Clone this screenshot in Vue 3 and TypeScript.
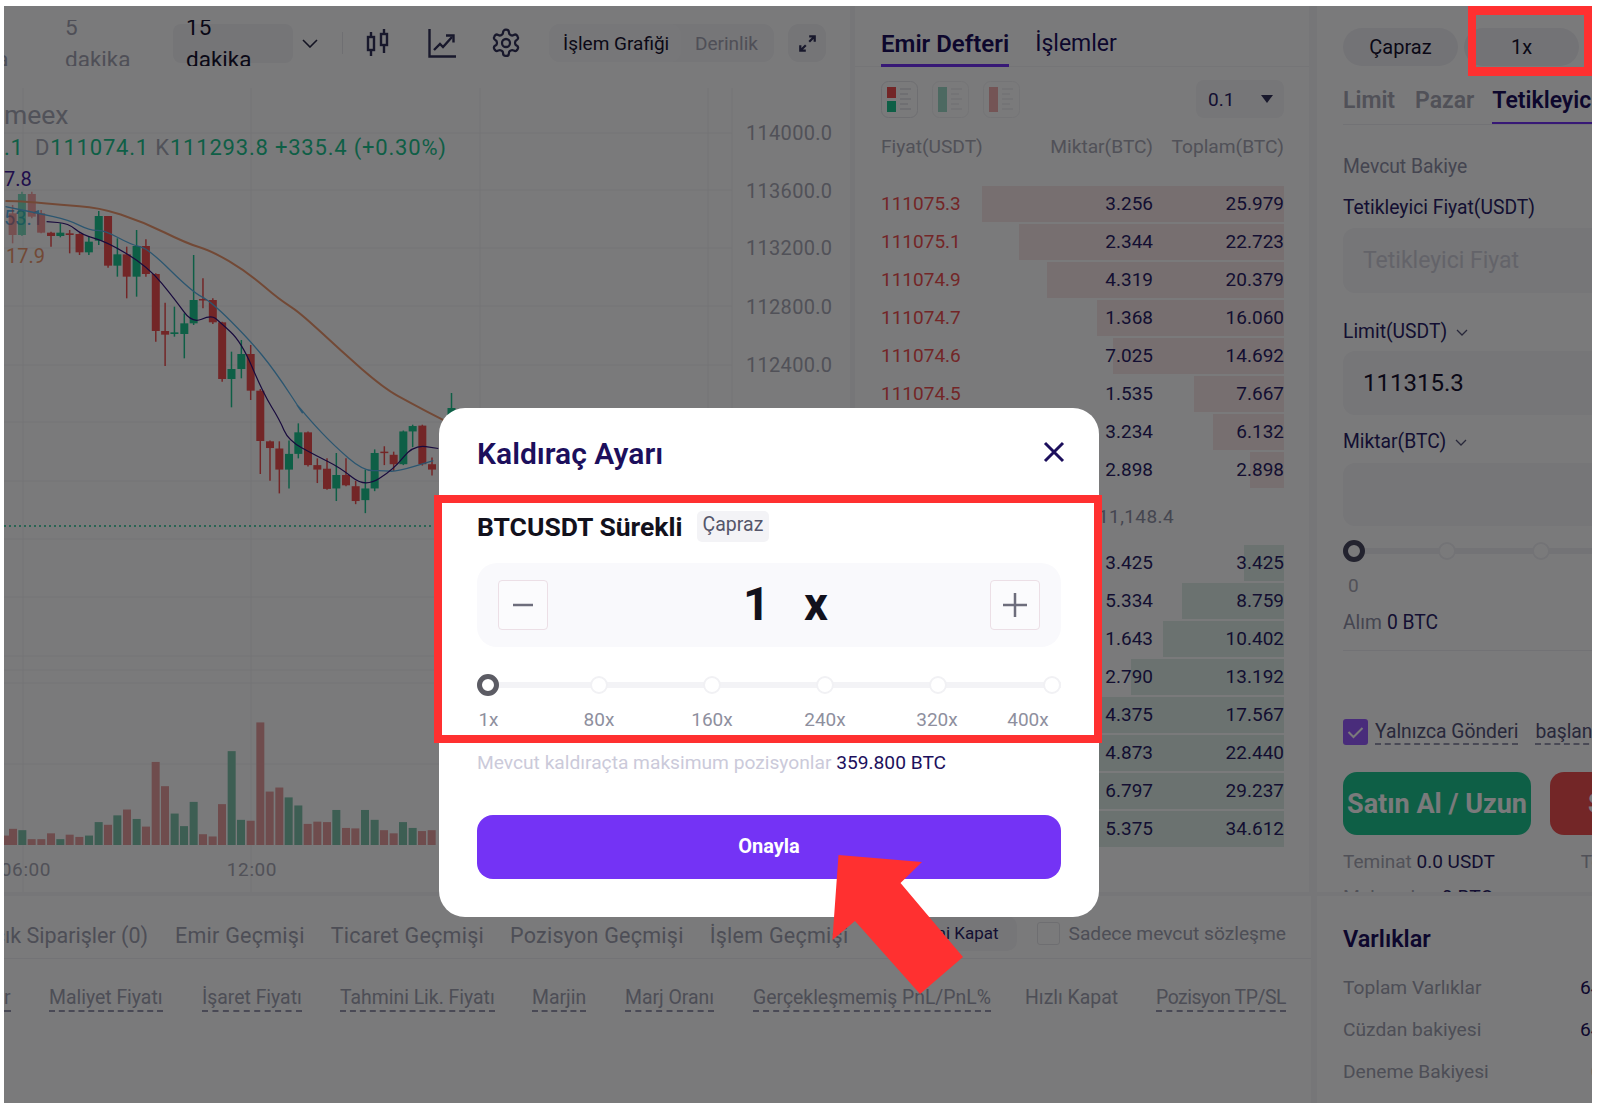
<script setup lang="ts">
type Candle = [number, number, number, number, number, 'r' | 'g', number?]
const z1 = (x: number, y: number): [number, number] => [x / 1.823, y / 3]
const z6 = (x: number, y: number): [number, number] => [x / 3, 400 + y / 2.227]

const upperCandles: Candle[] = [
  [23, 615, 640, 705, 730, 'r', 0.5], [40, 575, 582, 705, 708, 'g', 0.55], [58, 575, 582, 650, 655, 'r', 0.5], [75, 630, 640, 698, 700, 'r', 0.6],
  [93, 695, 698, 708, 740, 'r'], [110, 670, 698, 708, 712, 'g'], [127, 690, 700, 705, 760, 'r'], [145, 700, 702, 757, 765, 'r'],
  [162, 708, 725, 757, 765, 'g'], [180, 633, 648, 722, 735, 'g'], [197, 648, 648, 797, 803, 'r'], [214, 715, 763, 797, 830, 'g'],
  [231, 740, 763, 830, 895, 'r'], [249, 690, 738, 830, 890, 'g'], [266, 718, 738, 822, 830, 'r'], [284, 820, 822, 993, 1025, 'r'],
  [301, 908, 993, 1004, 1098, 'r'], [318, 920, 997, 1002, 1010, 'g'], [336, 940, 970, 1002, 1075, 'g'], [353, 765, 900, 970, 975, 'g'],
  [370, 835, 897, 900, 925, 'r'], [388, 895, 900, 967, 972, 'r'], [405, 965, 967, 1137, 1145, 'r'], [422, 1055, 1107, 1137, 1222, 'g'],
  [440, 1020, 1062, 1107, 1135, 'g'], [457, 1035, 1062, 1172, 1200, 'r'],
]
const lowerCandles: Candle[] = [
  [810, 90, 92, 107, 180, 'r'], [838, 92, 108, 155, 208, 'r'], [867, 90, 120, 155, 197, 'g'], [895, 52, 72, 120, 130, 'g'],
  [924, 70, 72, 145, 148, 'r'], [952, 130, 145, 155, 185, 'r'], [981, 130, 153, 198, 200, 'r'], [1009, 118, 167, 197, 225, 'g'],
  [1038, 130, 167, 190, 192, 'r'], [1067, 180, 192, 225, 232, 'r'], [1096, 155, 197, 223, 252, 'g'], [1124, 110, 118, 197, 203, 'g'],
  [1153, 103, 115, 117, 145, 'r'], [1181, 115, 122, 143, 158, 'r'], [1210, 68, 70, 143, 145, 'g'], [1238, 55, 58, 70, 105, 'g'],
  [1267, 55, 57, 143, 146, 'r'], [1296, 128, 143, 155, 168, 'r'],
]
interface C { x: number; wt: number; bt: number; bb: number; wb: number; c: string; o: number }
const candles: C[] = [
  ...upperCandles.map((d) => ({ x: d[0] / 1.823, wt: d[1] / 3, bt: d[2] / 3, bb: d[3] / 3, wb: d[4] / 3, c: d[5], o: d[6] ?? 1 })),
  { x: 260.3, wt: 389, bt: 390.7, bb: 441, wb: 474, c: 'r', o: 1 },
  ...lowerCandles.map((d) => ({ x: d[0] / 3, wt: 400 + d[1] / 2.227, bt: 400 + d[2] / 2.227, bb: 400 + d[3] / 2.227, wb: 400 + d[4] / 2.227, c: d[5], o: d[6] ?? 1 })),
  { x: 451.5, wt: 393, bt: 408, bb: 420, wb: 430, c: 'g', o: 1 },
]
const volumes: [number, number, 'r' | 'g'][] = [
  [15, 970, 'r'], [39, 955, 'r'], [67, 958, 'g'], [95, 978, 'r'], [124, 978, 'r'], [153, 965, 'r'], [181, 978, 'g'], [209, 968, 'r'], [238, 973, 'r'], [267, 970, 'g'], [296, 940, 'g'], [324, 946, 'r'], [352, 925, 'g'], [381, 912, 'r'], [410, 933, 'g'], [438, 950, 'r'], [467, 806, 'r'], [495, 860, 'r'], [524, 921, 'g'], [552, 949, 'g'], [581, 895, 'g'], [609, 967, 'r'], [638, 972, 'r'], [666, 900, 'r'], [695, 782, 'g'], [723, 935, 'g'], [752, 937, 'r'], [781, 718, 'r'], [809, 872, 'r'], [838, 863, 'r'], [866, 885, 'g'], [895, 903, 'g'], [923, 944, 'r'], [952, 939, 'r'], [981, 940, 'r'], [1009, 913, 'g'], [1038, 953, 'r'], [1066, 954, 'r'], [1095, 913, 'g'], [1124, 935, 'g'], [1152, 958, 'r'], [1181, 965, 'r'], [1209, 940, 'g'], [1238, 953, 'g'], [1266, 960, 'r'], [1295, 958, 'r'],
]
const bars = volumes.map(([x, y, c]) => ({ x: x / 3 - 4, y: 400 + y / 2.227, h: 845 - (400 + y / 2.227), c }))
const toPath = (pts: [number, number][]) => {
  let d = `M${pts[0][0].toFixed(1)} ${pts[0][1].toFixed(1)}`
  for (let i = 1; i < pts.length; i++) {
    const p = pts[i - 1]
    const q = pts[i]
    const mx = ((p[0] + q[0]) / 2).toFixed(1)
    d += ` Q${p[0].toFixed(1)} ${p[1].toFixed(1)} ${mx} ${((p[1] + q[1]) / 2).toFixed(1)}`
  }
  const l = pts[pts.length - 1]
  return d + ` L${l[0].toFixed(1)} ${l[1].toFixed(1)}`
}
const orange = toPath(([[10, 603], [50, 605], [110, 615], [180, 622], [260, 665], [340, 730], [385, 752], [450, 815], [510, 900], [545, 935], [620, 1050], [700, 1165], [750, 1210], [805, 1258], [860, 1300]] as [number, number][]).map(([x, y]) => z1(x, y)))
const blue = toPath(([
  ...([[10, 620], [70, 640], [125, 660], [165, 692], [190, 690], [240, 735], [270, 745], [350, 875], [385, 905], [455, 1020], [500, 1110], [560, 1260]] as [number, number][]).map(([x, y]) => z1(x, y)),
  ...([[880, 0], [930, 45], [1000, 100], [1090, 158], [1150, 157], [1190, 160], [1300, 135]] as [number, number][]).map(([x, y]) => z6(x, y)),
]))
const purple = toPath(([
  ...([[85, 665], [125, 670], [150, 705], [195, 725], [270, 800], [320, 900], [350, 970], [385, 945], [400, 965], [440, 1025], [480, 1180], [510, 1260]] as [number, number][]).map(([x, y]) => z1(x, y)),
  ...([[865, 90], [950, 125], [1020, 150], [1095, 195], [1180, 155], [1240, 100], [1315, 108]] as [number, number][]).map(([x, y]) => z6(x, y)),
]))
const axis = [[133, '114000.0'], [191, '113600.0'], [248, '113200.0'], [307, '112800.0'], [365, '112400.0']] as [number, string][]
const hLines = [133, 190, 248, 306, 365, 422, 481, 539, 597, 656, 670, 683, 764]
const vLines = [23, 251, 480, 708]

const asks = [
  ['111075.3', '3.256', '25.979', 302], ['111075.1', '2.344', '22.723', 265], ['111074.9', '4.319', '20.379', 237], ['111074.7', '1.368', '16.060', 187],
  ['111074.6', '7.025', '14.692', 171], ['111074.5', '1.535', '7.667', 90], ['', '3.234', '6.132', 71], ['', '2.898', '2.898', 34],
] as [string, string, string, number][]
const bids = [
  ['', '3.425', '3.425', 40], ['', '5.334', '8.759', 102], ['', '1.643', '10.402', 121], ['', '2.790', '13.192', 153],
  ['', '4.375', '17.567', 200], ['', '4.873', '22.440', 250], ['', '6.797', '29.237', 320], ['', '5.375', '34.612', 403],
] as [string, string, string, number][]
const heads = [
  ['r', 0, 1], ['Maliyet Fiyatı', 45, 1], ['İşaret Fiyatı', 198, 1], ['Tahmini Lik. Fiyatı', 336, 1], ['Marjin', 528, 1], ['Marj Oranı', 621, 1],
  ['Gerçekleşmemiş PnL/PnL%', 749, 1], ['Hızlı Kapat', 1021, 0], ['Pozisyon TP/SL', 1152, 1],
] as [string, number, number][]
const dots = [0, 19, 38.3, 57.7, 77, 96.6].map((p) => ({ left: p + 1.9 }))
const marks = [['1x', 11.5], ['80x', 122], ['160x', 235], ['240x', 348], ['320x', 460], ['400x', 551]] as [string, number][]
</script>

<template>
  <div class="page">
    <div class="screen">
      <div class="upper">
        <section class="chart-panel">
          <div class="toolbar">
            <div class="strip">
              <span class="interval cut">1 dakika</span>
              <span class="interval five">5 dakika</span>
              <span class="chip"><span class="interval on">15 dakika</span></span>
            </div>
            <svg class="chev" width="16" height="9" viewBox="0 0 16 9"><path d="M1 1l7 7 7-7" fill="none" stroke="#2a2a48" stroke-width="1.6" /></svg>
            <i class="sep"></i>
            <svg class="ic-candle" width="24" height="28" viewBox="0 0 24 28" fill="none" stroke="#33335a" stroke-width="2.4">
              <rect x="2" y="8" width="6" height="13" /><path d="M5 3v5M5 21v6" /><rect x="15" y="5" width="6" height="11" /><path d="M18 0v5M18 16v8" />
            </svg>
            <svg class="ic-line" width="28" height="29" viewBox="0 0 28 29" fill="none" stroke="#33335a" stroke-width="2.4">
              <path d="M1.500 0v27.500H28" /><path d="M6 21l6-6 3 3 9-10" /><path d="M18 6.500h7.500v7" />
            </svg>
            <svg class="ic-gear" width="32" height="32" viewBox="0 0 24 24" fill="none" stroke="#33335a" stroke-width="1.700" stroke-linejoin="round">
              <path d="M12.200 2h-.4a2 2 0 0 0-2 2v.2a2 2 0 0 1-1 1.700l-.4.2a2 2 0 0 1-2 0l-.2-.1a2 2 0 0 0-2.700.7l-.2.4a2 2 0 0 0 .7 2.700l.2.1a2 2 0 0 1 1 1.700v.5a2 2 0 0 1-1 1.700l-.2.1a2 2 0 0 0-.7 2.700l.2.4a2 2 0 0 0 2.700.7l.2-.1a2 2 0 0 1 2 0l.4.2a2 2 0 0 1 1 1.700v.2a2 2 0 0 0 2 2h.4a2 2 0 0 0 2-2v-.2a2 2 0 0 1 1-1.700l.4-.2a2 2 0 0 1 2 0l.2.1a2 2 0 0 0 2.700-.7l.2-.4a2 2 0 0 0-.7-2.700l-.2-.1a2 2 0 0 1-1-1.700v-.5a2 2 0 0 1 1-1.700l.2-.1a2 2 0 0 0 .7-2.700l-.2-.4a2 2 0 0 0-2.700-.7l-.2.1a2 2 0 0 1-2 0l-.4-.2a2 2 0 0 1-1-1.700V4a2 2 0 0 0-2-2z" />
              <circle cx="12" cy="12" r="3" />
            </svg>
            <div class="segment"><span class="seg on">İşlem Grafiği</span><span class="seg">Derinlik</span></div>
            <div class="expand">
              <svg width="17" height="17" viewBox="0 0 20 20" fill="none" stroke="#33335a" stroke-width="2.600"><path d="M12 8l6-6M12 1.500h6.500V8M8 12l-6 6M1.500 12v6.500H8" /></svg>
            </div>
          </div>
          <svg class="chart" width="846" height="812" viewBox="4 80 846 812">
            <line v-for="y in hLines" :key="'h' + y" x1="4" x2="732" :y1="y" :y2="y" stroke="#f2f2f4" />
            <line v-for="x in vLines" :key="'v' + x" :x1="x" :x2="x" y1="88" y2="892" stroke="#f2f2f4" />
            <line x1="732" x2="732" y1="88" y2="892" stroke="#f2f2f4" />
            <line x1="4" x2="432" y1="526" y2="526" stroke="#1fc691" stroke-width="1.500" stroke-dasharray="2 3" />
            <text x="4" y="124" class="t-name">meex</text>
            <text x="4" y="155" class="t-leg"><tspan class="g">.1 </tspan><tspan class="m" dx="5">D</tspan><tspan class="g">111074.1 </tspan><tspan class="m">K</tspan><tspan class="g">111293.8 +335.4 (+0.30%)</tspan></text>
            <text x="4" y="186" class="t-ma p">7.8</text>
            <text x="4" y="225" class="t-ma b">53.1</text>
            <text x="6" y="263" class="t-ma o">17.9</text>
            <g v-for="(c, i) in candles" :key="'c' + i" :opacity="c.o">
              <line :x1="c.x" :x2="c.x" :y1="c.wt" :y2="c.wb" :stroke="c.c === 'r' ? '#f05151' : '#1fc691'" stroke-width="1.500" />
              <rect :x="c.x - 4" :width="8" :y="c.bt" :height="Math.max(c.bb - c.bt, 1.500)" :fill="c.c === 'r' ? '#f05151' : '#1fc691'" />
            </g>
            <path :d="orange" fill="none" stroke="#ef9a70" stroke-width="2" />
            <path :d="blue" fill="none" stroke="#5cb4e8" stroke-width="1.300" />
            <path :d="purple" fill="none" stroke="#32157e" stroke-width="1.200" />
            <rect v-for="(b, i) in bars" :key="'b' + i" :x="b.x" :y="b.y" width="8" :height="b.h" :fill="b.c === 'r' ? '#e8a0a0' : '#7fc4ac'" />
            <text v-for="a in axis" :key="a[1]" x="746" :y="a[0] + 7" class="t-axis">{{ a[1] }}</text>
            <text x="252" y="876" text-anchor="middle" class="t-time">12:00</text>
            <text x="26" y="876" text-anchor="middle" class="t-time">06:00</text>
          </svg>
        </section>

        <section class="book">
          <div class="book-tabs">
            <span class="book-tab on">Emir Defteri</span>
            <span class="book-tab">İşlemler</span>
          </div>
          <div class="book-tools">
            <svg class="mode" width="37" height="37" viewBox="0 0 37 37"><rect x=".5" y=".5" width="36" height="36" rx="7" fill="#fff" stroke="#e6e6ea" /><rect x="6" y="6" width="9" height="11" fill="#f05151" /><rect x="6" y="20" width="9" height="11" fill="#1fc691" /><path d="M19 8h11M19 13h8M19 18h11M19 23h8M19 28h11" stroke="#e2e2e8" stroke-width="1.500" /></svg>
            <svg class="mode" width="37" height="37" viewBox="0 0 37 37"><rect x=".5" y=".5" width="36" height="36" rx="7" fill="#fff" stroke="#f2f2f4" /><rect x="6" y="6" width="9" height="25" fill="#a0dcc8" /><path d="M19 8h11M19 13h8M19 18h11M19 23h8M19 28h11" stroke="#eeeef2" stroke-width="1.500" /></svg>
            <svg class="mode" width="37" height="37" viewBox="0 0 37 37"><rect x=".5" y=".5" width="36" height="36" rx="7" fill="#fff" stroke="#f2f2f4" /><rect x="6" y="6" width="9" height="25" fill="#f2b0b0" /><path d="M19 8h11M19 13h8M19 18h11M19 23h8M19 28h11" stroke="#eeeef2" stroke-width="1.500" /></svg>
            <div class="step"><span>0.1</span><i class="tri"></i></div>
          </div>
          <div class="book-head"><span>Fiyat(USDT)</span><span>Miktar(BTC)</span><span>Toplam(BTC)</span></div>
          <div class="rows asks">
            <div v-for="r in asks" :key="r[1]" class="row">
              <i class="depth" :style="{ width: r[3] + 'px' }"></i>
              <span class="price">{{ r[0] }}</span><span>{{ r[1] }}</span><span>{{ r[2] }}</span>
            </div>
          </div>
          <div class="mid"><span>111,148.4</span></div>
          <div class="rows bids">
            <div v-for="r in bids" :key="r[1]" class="row">
              <i class="depth" :style="{ width: r[3] + 'px' }"></i>
              <span class="price">{{ r[0] }}</span><span>{{ r[1] }}</span><span>{{ r[2] }}</span>
            </div>
          </div>
        </section>

        <section class="order">
          <div class="pills"><span class="pill">Çapraz</span><span class="pill">1x</span></div>
          <div class="order-tabs">
            <span class="o-tab">Limit</span><span class="o-tab">Pazar</span><span class="o-tab on">Tetikleyici Limit</span>
          </div>
          <div class="lbl soft first">Mevcut Bakiye</div>
          <div class="lbl l2">Tetikleyici Fiyat(USDT)</div>
          <div class="field ph f1">Tetikleyici Fiyat</div>
          <div class="lbl l3">Limit(USDT)<svg width="12" height="7" viewBox="0 0 12 7"><path d="M1 1l5 5 5-5" fill="none" stroke="#555578" stroke-width="1.300" /></svg></div>
          <div class="field val">111315.3</div>
          <div class="lbl l4">Miktar(BTC)<svg width="12" height="7" viewBox="0 0 12 7"><path d="M1 1l5 5 5-5" fill="none" stroke="#555578" stroke-width="1.300" /></svg></div>
          <div class="field f3"></div>
          <div class="o-slider"><i class="o-knob"></i><i class="o-dot d1"></i><i class="o-dot d2"></i></div>
          <div class="o-zero mute">0</div>
          <div class="lbl l5"><span class="soft">Alım</span> 0 BTC</div>
          <div class="rule"></div>
          <div class="post">
            <span class="check"><svg width="17" height="13" viewBox="0 0 17 13"><path d="M1.500 6l5 5L15.500 2" fill="none" stroke="#fff" stroke-width="2" /></svg></span>
            <span class="dash">Yalnızca Gönderi</span><span class="dash d2x">başlangıç</span>
          </div>
          <div class="actions"><button class="buy">Satın Al / Uzun</button><button class="sell">Satış</button></div>
          <div class="fees"><span><span class="mute">Teminat</span> 0.0 USDT</span><span class="mute t2">Teminat</span></div>
          <div class="lbl l6"><span class="mute">Maks. alım</span> 0 BTC</div>
        </section>
      </div>

      <div class="lower">
        <section class="orders">
          <div class="o-top">
            <div class="first-tab"><span>Açık Siparişler (0)</span></div>
            <span class="btab t1">Emir Geçmişi</span>
            <span class="btab">Ticaret Geçmişi</span>
            <span class="btab">Pozisyon Geçmişi</span>
            <span class="btab">İşlem Geçmişi</span>
            <span class="closeall">Hepsini Kapat</span>
            <span class="box"></span>
            <span class="only">Sadece mevcut sözleşme</span>
          </div>
          <div class="o-heads">
            <span v-for="h in heads" :key="h[0]" class="o-head" :class="{ dash: !!h[2] }" :style="{ left: h[1] + 'px' }">{{ h[0] }}</span>
          </div>
        </section>
        <section class="assets">
          <h3>Varlıklar</h3>
          <div class="a-row"><span>Toplam Varlıklar</span><b>64.120</b></div>
          <div class="a-row"><span>Cüzdan bakiyesi</span><b>64.120</b></div>
          <div class="a-row"><span>Deneme Bakiyesi</span><b class="z">0</b></div>
        </section>
      </div>
      <div class="overlay"></div>
    </div>

    <div class="modal">
      <header class="m-head">
        <h2>Kaldıraç Ayarı</h2>
        <svg width="22" height="22" viewBox="0 0 22 22"><path d="M2 2l18 18M20 2L2 20" stroke="#1c0f5c" stroke-width="3" fill="none" /></svg>
      </header>
      <div class="m-sym"><strong>BTCUSDT Sürekli</strong><span class="tag">Çapraz</span></div>
      <div class="m-input">
        <span class="adj"><svg width="20" height="20" viewBox="0 0 20 20"><path d="M0 10h20" stroke="#6d6d7c" stroke-width="2.500" /></svg></span>
        <div class="lev"><span>1</span><span>x</span></div>
        <span class="adj"><svg width="24" height="24" viewBox="0 0 24 24"><path d="M0 12h24M12 0v24" stroke="#6d6d7c" stroke-width="2.500" /></svg></span>
      </div>
      <div class="m-slider">
        <i class="m-track"></i>
        <i v-for="(d, i) in dots" :key="i" class="m-dot" :class="{ act: i === 0 }" :style="{ left: d.left + '%' }"></i>
      </div>
      <div class="m-marks"><span v-for="m in marks" :key="m[0]" :style="{ left: m[1] + 'px' }">{{ m[0] }}</span></div>
      <p class="m-info">Mevcut kaldıraçta maksimum pozisyonlar <span>359.800 BTC</span></p>
      <button class="confirm">Onayla</button>
    </div>

    <div class="mark-top"></div>
    <div class="mark-modal"></div>
    <svg class="arrow" width="140" height="145" viewBox="830 853 140 145"><polygon points="838.500,855 922,862 900.500,883 963,957 920,994 855,921 832.400,940" fill="#ff3030" /></svg>
  </div>
</template>

<style>
html, body { margin: 0; background: #fff; }
</style>

<style scoped>
.page { position: relative; width: 1600px; height: 1104px; overflow: hidden; background: #fff; font-family: Roboto, "Noto Sans", sans-serif; color: #2a1f66; }
.screen { position: absolute; left: 4px; top: 6px; width: 1588px; height: 1097px; background: #f6f6f8; overflow: hidden; display: flex; flex-direction: column; gap: 4px; }
.upper { display: flex; height: 886px; flex: none; }
.lower { display: flex; height: 207px; flex: none; }
.overlay { position: absolute; inset: 0; background: rgba(0, 0, 2, .52); }
section { background: #fff; overflow: hidden; flex: none; box-sizing: border-box; }

.chart-panel { width: 846px; }
.toolbar { height: 74px; display: flex; align-items: center; }
.strip { height: 46px; width: 289px; overflow: hidden; display: flex; align-items: center; flex: none; }
.interval { display: block; width: 65px; font-size: 22.500px; line-height: 32px; color: #a5a6b4; flex: none; }
.interval.cut { margin-left: -61px; }
.interval.five { margin-left: 57px; }
.interval.on { color: #16122e; }
.chip { margin-left: 43px; width: 120px; height: 39px; box-sizing: border-box; padding-left: 13px; background: #f4f4f6; border-radius: 8px; display: flex; align-items: center; flex: none; }
.chev { margin-left: 9px; flex: none; }
.sep { width: 1px; height: 22px; margin-left: 24px; background: #e8e8ec; flex: none; }
.ic-candle { margin-left: 23px; flex: none; }
.ic-line { margin-left: 38px; flex: none; }
.ic-gear { margin-left: 34px; flex: none; }
.segment { margin-left: 27px; width: 225px; height: 38px; background: #f6f6f8; border-radius: 11px; display: flex; flex: none; font-size: 19px; box-sizing: border-box; }
.seg { display: flex; align-items: center; padding-left: 14px; color: #a5a6b4; white-space: nowrap; }
.seg.on { width: 132px; box-sizing: border-box; background: #f9f9fb; border-radius: 11px; color: #16122e; }
.expand { margin-left: 14px; width: 38px; height: 38px; background: #f4f4f6; border-radius: 11px; display: flex; align-items: center; justify-content: center; flex: none; }
.chart { display: block; font-family: Roboto, sans-serif; }
.t-name { font-size: 26.500px; fill: #aaabb8; }
.t-leg { font-size: 22px; letter-spacing: .8px; }
.t-leg .g { fill: #1fc691; }
.t-leg .m { fill: #aaabb8; }
.t-ma { font-size: 20px; }
.t-ma.p { fill: #43209c; }
.t-ma.b { fill: #5cb4e8; }
.t-ma.o { fill: #ef9a70; }
.t-axis { font-size: 20px; fill: #a9aab6; letter-spacing: .3px; }
.t-time { font-size: 19px; fill: #a9aab6; letter-spacing: .6px; }

.book { width: 454px; margin: 0 8px 0 5px; padding: 0 25px 0 26px; }
.book-tabs { height: 61px; margin: 0 -25px 0 -26px; padding: 0 26px; border-bottom: 1px solid #f4f4f6; display: flex; gap: 26px; box-sizing: border-box; }
.book-tab { height: 61px; line-height: 76px; box-sizing: border-box; font-size: 23px; color: #1c0f5c; white-space: nowrap; }
.book-tab.on { font-size: 24px; font-weight: 600; border-bottom: 3px solid #7433f5; }
.book-tools { display: flex; align-items: center; margin-top: 13px; height: 38px; }
.mode { margin-right: 14px; flex: none; }
.step { margin-left: auto; width: 88px; height: 38px; background: #f6f6f8; border-radius: 8px; display: flex; align-items: center; justify-content: space-between; padding: 0 11px 0 12px; box-sizing: border-box; font-size: 19px; }
.tri { width: 0; height: 0; border-left: 6px solid transparent; border-right: 6px solid transparent; border-top: 8px solid #33335a; }
.book-head { display: grid; grid-template-columns: 1fr 90px 131px; margin-top: 17px; height: 24px; line-height: 24px; font-size: 19.200px; color: #a9aab6; white-space: nowrap; }
.book-head span:nth-child(2), .book-head span:nth-child(3) { justify-self: end; }
.row span:nth-child(n + 3) { text-align: right; }
.rows { display: flex; flex-direction: column; gap: 2px; }
.asks { margin-top: 27px; }
.row { position: relative; display: grid; grid-template-columns: 1fr 90px 131px; height: 36px; line-height: 36px; font-size: 19px; color: #2a1f66; }
.row span { position: relative; }
.depth { position: absolute; right: 0; top: 0; bottom: 0; }
.asks .depth { background: #f8e8e8; }
.bids .depth { background: #e0efe9; }
.price { color: #f05151; }
.mid { height: 53px; margin-top: 2px; font-size: 19px; color: #9092a6; display: grid; grid-template-columns: 293px; line-height: 54px; letter-spacing: .4px; }
.mid span { text-align: right; }
.bids { margin-top: 2px; }

.order { width: 275px; padding-left: 26px; }
.order > * { width: 300px; white-space: nowrap; }
.pills { padding-top: 22px; display: flex; gap: 6px; }
.pill { width: 115px; height: 38px; line-height: 38px; text-align: center; background: #f1f1f4; border-radius: 19px; font-size: 20px; color: #16122e; }
.order-tabs { margin-top: 14px; height: 45px; display: flex; gap: 20px; box-sizing: border-box; position: relative; }
.order-tabs::after { content: ""; position: absolute; left: 0; right: 0; bottom: 0; height: 1px; background: #eeeef2; }
.o-tab { height: 45px; box-sizing: border-box; font-size: 23px; line-height: 42px; font-weight: 600; color: #a9aab6; }
.o-tab.on { color: #1c0f5c; border-bottom: 3px solid #7433f5; margin-left: -2px; }
.lbl { height: 24px; line-height: 24px; font-size: 19.300px; color: #2a1f66; display: flex; align-items: center; gap: 5px; }
.lbl svg { margin-left: 4px; }
.mute { color: #a9aab6; }
.soft { color: #8f90a6; }
.first { margin-top: 30px; }
.l2 { margin-top: 17px; }
.l3 { margin-top: 27px; }
.l4 { margin-top: 15px; }
.l5 { margin-top: 13px; }
.l6 { margin-top: 13px; }
.field { height: 64px; margin-top: 7px; padding-left: 20px; box-sizing: border-box; background: #f6f6f8; border-radius: 12px; display: flex; align-items: center; font-size: 23px; }
.ph { color: #d0d0da; }
.f1 { height: 65px; margin-top: 8px; }
.val { font-size: 24px; color: #16122e; }
.f3 { height: 63px; margin-top: 9px; }
.o-slider { position: relative; height: 20px; margin-top: 15px; }
.o-slider::before { content: ""; position: absolute; left: 0; right: 0; top: 7px; height: 6px; background: #f1f1f4; }
.o-knob { position: absolute; left: 0; top: -1px; width: 22px; height: 22px; box-sizing: border-box; border: 5px solid #4a4a60; border-radius: 50%; background: #fff; }
.o-dot { position: absolute; top: 1px; width: 18px; height: 18px; box-sizing: border-box; border: 2px solid #f1f1f4; border-radius: 50%; background: #fff; }
.o-dot.d1 { left: 95px; }
.o-dot.d2 { left: 189px; }
.o-zero { margin-top: 13px; height: 24px; line-height: 24px; font-size: 19px; padding-left: 5px; }
.rule { height: 1px; margin-top: 15px; background: #eeeef2; }
.post { margin-top: 68px; height: 26px; display: flex; align-items: flex-start; font-size: 19.300px; color: #55557a; }
.check { width: 25px; height: 26px; background: #9a5cff; border-radius: 3px; display: flex; align-items: center; justify-content: center; flex: none; margin-right: 7px; }
.dash { border-bottom: 2px dashed #9a9ab0; }
.post .dash { height: 24px; line-height: 26px; }
.d2x { margin-left: 17px; }
.actions { margin-top: 27px; display: flex; gap: 19px; }
.buy, .sell { height: 63px; border: 0; border-radius: 14px; font: 700 27px Roboto, sans-serif; color: #fff; flex: none; white-space: nowrap; padding: 0; }
.buy { width: 188px; background: #1fc691; }
.sell { width: 188px; background: #f05151; text-align: left; padding-left: 38px; }
.fees { margin-top: 15px; height: 24px; line-height: 24px; font-size: 19px; display: flex; }
.t2 { margin-left: 86px; }

.orders { width: 1307px; margin-right: 6px; }
.o-top { height: 63px; padding: 16px 25px 0 0; display: flex; align-items: center; border-bottom: 1px solid #f1f1f4; box-sizing: border-box; font-size: 21.500px; color: #a2a3b2; white-space: nowrap; }
.first-tab { width: 144px; display: flex; justify-content: flex-end; overflow: hidden; flex: none; }
.btab { margin-left: 26px; letter-spacing: .25px; }
.btab.t1 { margin-left: 27px; }
.closeall { margin-left: auto; margin-top: -4px; width: 130px; height: 35px; line-height: 35px; text-align: right; padding-right: 18px; box-sizing: border-box; background: #f6f6f8; border-radius: 10px; font-size: 17px; color: #2a1f66; flex: none; }
.box { margin-left: 20px; margin-top: -4px; width: 23px; height: 23px; border: 1px solid #e6e6ea; border-radius: 3px; box-sizing: border-box; flex: none; }
.only { margin-left: 9px; margin-top: -4px; font-size: 19.200px; }
.o-heads { position: relative; height: 60px; font-size: 19.400px; color: #a2a3b2; }
.o-head { position: absolute; top: 27px; line-height: 24px; white-space: nowrap; }
.o-head:last-child { letter-spacing: -.45px; }

.assets { width: 275px; padding-left: 26px; }
.assets h3 { margin: 28px 0 0; font-size: 23.500px; line-height: 30px; font-weight: 600; color: #1c0f5c; }
.a-row { display: flex; width: 249px; justify-content: space-between; font-size: 19.200px; line-height: 24px; color: #a2a3b2; margin-top: 18px; white-space: nowrap; position: relative; }
.a-row:first-of-type { margin-top: 22px; }
.a-row b { position: absolute; left: 237px; font-weight: 400; color: #1c0f5c; }
.a-row b.z { left: 248px; }

.modal { position: absolute; left: 439px; top: 408px; width: 660px; height: 509px; box-sizing: border-box; padding: 0 38px; background: #fff; border-radius: 26px; color: #1c0f4a; }
.m-head { height: 91px; display: flex; align-items: center; justify-content: space-between; }
.m-head h2 { margin: 0; font-size: 30px; font-weight: 600; color: #1c0f5c; }
.m-head svg { margin: -4px -4px 0 0; }
.m-sym { margin-top: 12px; height: 31px; display: flex; align-items: center; gap: 14px; }
.m-sym strong { font-size: 26.500px; font-weight: 700; color: #12111c; }
.tag { height: 31px; line-height: 28px; padding: 0 6px; background: #f3f3f6; border-radius: 5px; font-size: 19.500px; color: #55566a; }
.m-input { margin-top: 21px; height: 84px; padding: 0 21px; background: #f9f9fc; border-radius: 20px; display: flex; align-items: center; justify-content: space-between; }
.adj { width: 50px; height: 50px; box-sizing: border-box; border: 1px solid #ecdfe6; border-radius: 4px; background: #fbfbfd; display: flex; align-items: center; justify-content: center; }
.lev { display: flex; gap: 34px; align-items: baseline; font-size: 47px; font-weight: 700; color: #12111c; margin: 0 0 4px 33px; }
.m-slider { position: relative; margin-top: 26px; height: 24px; }
.m-track { position: absolute; left: 0; right: 0; top: 9px; height: 6px; background: #f3f3f6; }
.m-dot { position: absolute; top: 3px; width: 18px; height: 18px; margin-left: -9px; box-sizing: border-box; border: 2px solid #f1f1f4; border-radius: 50%; background: #fff; }
.m-dot.act { top: 1px; width: 22px; height: 22px; margin-left: -11px; border: 5px solid #5c5c64; }
.m-marks { position: relative; margin-top: 11px; height: 24px; font-size: 19px; line-height: 24px; color: #8e8f9e; }
.m-marks span { position: absolute; top: 0; transform: translateX(-50%); }
.m-info { margin: 19px 0 0; height: 24px; line-height: 24px; font-size: 19.200px; color: #cbcada; white-space: nowrap; }
.m-info span { color: #1c0f5c; }
.confirm { display: block; width: 100%; height: 64px; margin-top: 40px; border: 0; border-radius: 16px; background: #7433f5; color: #fff; font: 700 20px Roboto, sans-serif; padding: 0 0 2px; }

.mark-top, .mark-modal { position: absolute; box-sizing: border-box; border: 8px solid #ff3030; }
.mark-top { left: 1468px; top: 6px; width: 124px; height: 70px; border-width: 9px 8px; }
.mark-modal { left: 434px; top: 495px; width: 668px; height: 248px; }
.arrow { position: absolute; left: 830px; top: 853px; }
</style>
